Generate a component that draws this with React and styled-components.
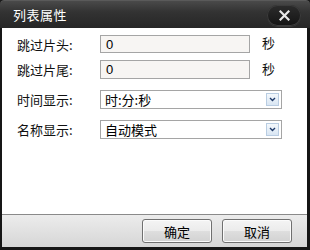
import React from "react";
import styled, { createGlobalStyle } from "styled-components";

const Global = createGlobalStyle`
  html, body { margin: 0; padding: 0; background: #1a1a1a; }
  body { font-family: "Noto Sans CJK SC", "Liberation Sans", sans-serif; }
  * { box-sizing: border-box; }
`;

const Dialog = styled.div`
  width: 310px;
  height: 250px;
  display: flex;
  flex-direction: column;
  background: #161616;
  border-radius: 4px 4px 0 0;
  padding: 0 3px 3px 2px;
  overflow: hidden;
`;

const TitleBar = styled.div`
  height: 28px;
  margin: 0 -3px 0 -2px;
  padding: 0 9px 0 13px;
  display: flex;
  align-items: center;
  justify-content: space-between;
  background: linear-gradient(#4a4a4a 0%, #333 40%, #262626 100%);
  border-top: 1px solid #5a5a5a;
  border-radius: 4px 4px 0 0;
  color: #fff;
  font-size: 13px;
  letter-spacing: 0.5px;
`;

const CloseButton = styled.div`
  width: 34px;
  height: 21px;
  border-radius: 11px;
  background: linear-gradient(#2c2c2c, #141414);
  box-shadow: inset 0 0 0 1px #3c3c3c, 0 1px 0 #3a3a3a;
  display: flex;
  align-items: center;
  justify-content: center;
  margin-top: 1px;
`;

const Content = styled.div`
  flex: 1;
  background: #fff;
  padding: 7px 0 0 15px;
  display: flex;
  flex-direction: column;
`;

const Row = styled.div`
  display: flex;
  align-items: center;
  height: ${(p) => p.$h}px;
  margin-top: ${(p) => p.$mt}px;
`;

const Label = styled.div`
  width: 83px;
  font-size: 13px;
  color: #111;
`;

const TextInput = styled.div`
  width: 150px;
  height: 100%;
  border: 1px solid #a5a5a5;
  background: #f7f5f3;
  font-family: "Liberation Sans", sans-serif;
  font-size: 13px;
  color: #000;
  padding-left: 5px;
  display: flex;
  align-items: center;
`;

const Unit = styled.div`
  margin-left: 12px;
  font-size: 13px;
  color: #111;
  margin-top: -3px;
`;

const Select = styled.div`
  width: 182px;
  height: 100%;
  border: 1px solid #a5a5a5;
  background: #fff;
  display: flex;
  align-items: center;
  justify-content: space-between;
  padding: 0 2px 0 4px;
  font-size: 13px;
  color: #000;
`;

const DropButton = styled.div`
  width: 13px;
  height: 13px;
  border: 1px solid #b9cde2;
  background: linear-gradient(#f4f8fc, #d9e6f3);
  display: flex;
  align-items: center;
  justify-content: center;
`;

const Footer = styled.div`
  height: 33px;
  border-top: 1px solid #8a8a8a;
  background: linear-gradient(#ececec, #d6d6d6);
  display: flex;
  justify-content: flex-end;
  align-items: center;
  gap: 10px;
  padding: 0 15px 0 0;
`;

const Button = styled.div`
  width: 70px;
  height: 24px;
  border: 1px solid #707070;
  border-radius: 3px;
  background: linear-gradient(#f4f4f4 0%, #ebebeb 50%, #dedede 51%, #d2d2d2 100%);
  box-shadow: inset 0 0 0 1px #fbfbfb;
  display: flex;
  align-items: center;
  justify-content: center;
  font-size: 13px;
  color: #000;
`;

const Chevron = () => (
  <svg width="7" height="5" viewBox="0 0 7 5">
    <path d="M1 1 L3.5 3.5 L6 1" fill="none" stroke="#1f3a6a" strokeWidth="1.4" />
  </svg>
);

const CloseX = () => (
  <svg width="11" height="11" viewBox="0 0 11 11">
    <path d="M1.5 1.5 L9.5 9.5 M9.5 1.5 L1.5 9.5" stroke="#e8e8e8" strokeWidth="2.2" strokeLinecap="square" />
  </svg>
);

export default function App() {
  return (
    <>
      <Global />
      <Dialog>
        <TitleBar>
          <span>列表属性</span>
          <CloseButton>
            <CloseX />
          </CloseButton>
        </TitleBar>
        <Content>
          <Row $h={18} $mt={0}>
            <Label>跳过片头:</Label>
            <TextInput>0</TextInput>
            <Unit>秒</Unit>
          </Row>
          <Row $h={19} $mt={7}>
            <Label>跳过片尾:</Label>
            <TextInput>0</TextInput>
            <Unit>秒</Unit>
          </Row>
          <Row $h={19} $mt={11}>
            <Label>时间显示:</Label>
            <Select>
              <span>时:分:秒</span>
              <DropButton>
                <Chevron />
              </DropButton>
            </Select>
          </Row>
          <Row $h={19} $mt={11}>
            <Label>名称显示:</Label>
            <Select>
              <span>自动模式</span>
              <DropButton>
                <Chevron />
              </DropButton>
            </Select>
          </Row>
        </Content>
        <Footer>
          <Button>确定</Button>
          <Button>取消</Button>
        </Footer>
      </Dialog>
    </>
  );
}
